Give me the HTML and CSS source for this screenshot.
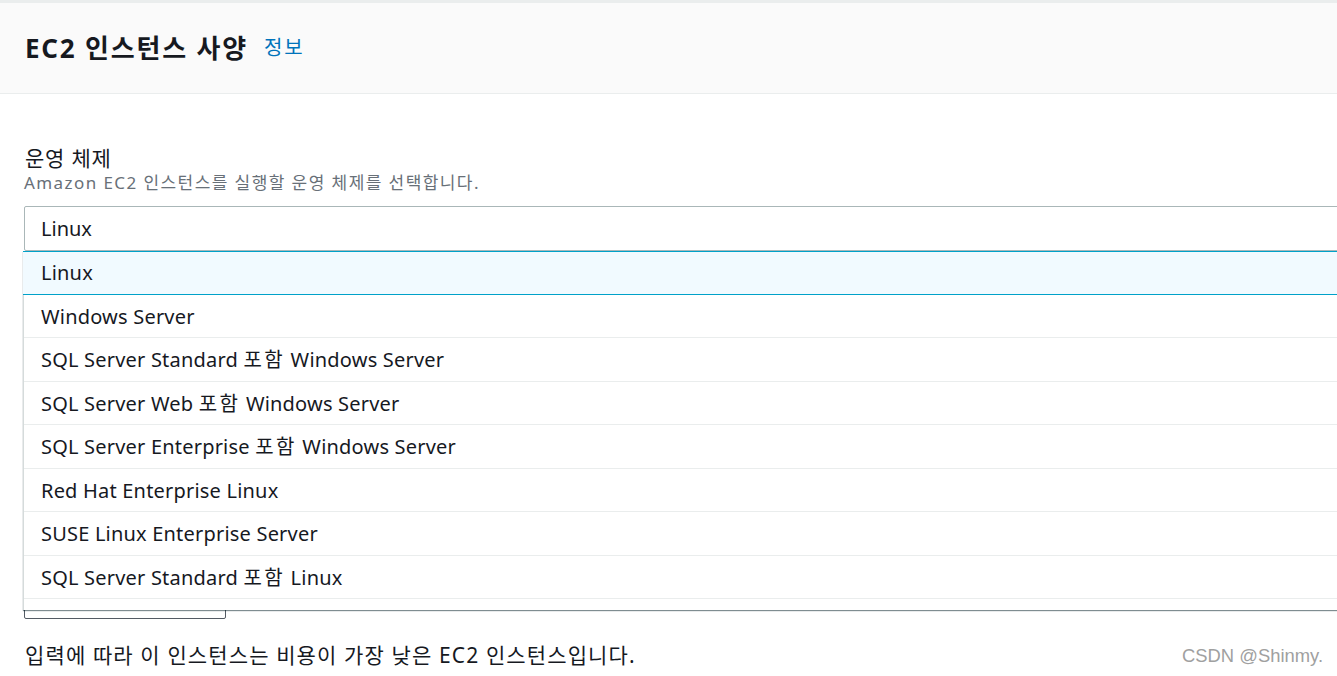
FILE: index.html
```html
<!DOCTYPE html>
<html lang="ko">
<head>
<meta charset="utf-8">
<link rel="stylesheet" href="styles.css">
</head>
<body>
<div class="page">
  <header class="head">
    <h2 class="title">EC2 인스턴스 사양</h2>
    <a class="info" href="#">정보</a>
  </header>
  <main class="content">
    <div class="label">운영 체제</div>
    <div class="desc">Amazon EC2 인스턴스를 실행할 운영 체제를 선택합니다.</div>
    <div class="select-wrap">
      <div class="select">Linux</div>
      <ul class="dropdown">
        <li class="opt selected">Linux</li>
        <li class="opt">Windows Server</li>
        <li class="opt">SQL Server Standard <span class="ko">포함</span> Windows Server</li>
        <li class="opt">SQL Server Web <span class="ko">포함</span> Windows Server</li>
        <li class="opt">SQL Server Enterprise <span class="ko">포함</span> Windows Server</li>
        <li class="opt">Red Hat Enterprise Linux</li>
        <li class="opt">SUSE Linux Enterprise Server</li>
        <li class="opt">SQL Server Standard <span class="ko">포함</span> Linux</li>
      </ul>
    </div>
    <div class="hidden-box"></div>
    <p class="result">입력에 따라 이 인스턴스는 비용이 가장 낮은 EC2 인스턴스입니다.</p>
  </main>
  <div class="watermark">CSDN @Shinmy.</div>
</div>
</body>
</html>
```

FILE: styles.css
```css
html, body {
  margin: 0;
  padding: 0;
  background: #ffffff;
  overflow: hidden;
}
body {
  font-family: "Noto Sans", "Noto Sans CJK KR", sans-serif;
  color: #16191f;
  width: 1337px;
  height: 676px;
}
.page {
  position: relative;
  height: 676px;
}
.head {
  display: flex;
  align-items: center;
  height: 90px;
  border-top: 3px solid #eaeded;
  border-bottom: 1px solid #eaeded;
  background: #fafafa;
  padding-left: 25px;
}
.title {
  margin: 0;
  font-size: 26px;
  font-weight: 700;
  letter-spacing: 1.8px;
  line-height: 30px;
  font-family: "Noto Sans", "Noto Sans CJK KR", sans-serif;
}
.info {
  margin-left: 16px;
  color: #0073bb;
  text-decoration: none;
  font-size: 20px;
  letter-spacing: 2px;
  line-height: 30px;
}
.content {
  padding: 52px 0 0 24px;
}
.label {
  font-size: 21px;
  letter-spacing: 0.8px;
  line-height: 24px;
  padding-left: 1px;
}
.desc {
  font-size: 17px;
  letter-spacing: 1.42px;
  line-height: 20px;
  color: #687078;
  margin-top: 3px;
}
.select-wrap {
  position: relative;
  margin-top: 13px;
  margin-right: -20px;
}
.select {
  box-sizing: border-box;
  height: 45px;
  border: 1px solid #aab7b8;
  border-radius: 2px;
  padding-left: 16px;
  font-size: 20px;
  line-height: 44px;
}
.dropdown {
  position: absolute;
  top: 45px;
  left: -1px;
  right: 0;
  z-index: 2;
  margin: 0;
  padding: 0 0 11px;
  list-style: none;
  background: #ffffff;
  border-left: 1px solid #d5dbdb;
  box-shadow: 0 1px 1px 0 rgba(0, 28, 36, 0.5);
}
.opt {
  box-sizing: border-box;
  height: 43.5px;
  line-height: 43px;
  padding-left: 17px;
  font-size: 20px;
  letter-spacing: 0.2px;
  border-bottom: 1px solid #eaeded;
}
.ko {
  letter-spacing: 2.5px;
}
.opt.selected {
  background: #f1faff;
  border-top: 1px solid #00a1c9;
  border-bottom: 1px solid #00a1c9;
  margin-left: -1px;
  padding-left: 18px;
  line-height: 42px;
}
.hidden-box {
  box-sizing: border-box;
  width: 202px;
  height: 40px;
  margin-top: 328px;
  border: 1px solid #545b64;
  border-radius: 2px;
}
.result {
  margin: 24px 0 0 1px;
  font-size: 21px;
  letter-spacing: 1.12px;
  line-height: 24px;
}
.watermark {
  position: absolute;
  right: 14px;
  bottom: 9px;
  font-family: "Liberation Sans", sans-serif;
  font-size: 18.4px;
  color: #a0a0a0;
}
```
